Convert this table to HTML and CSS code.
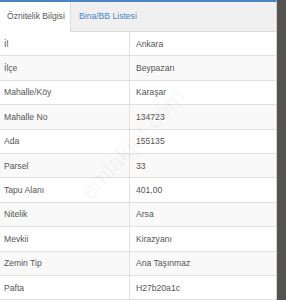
FILE: index.html
```html
<!DOCTYPE html>
<html lang="tr">
<head>
<meta charset="utf-8">
<link rel="stylesheet" href="styles.css">
</head>
<body>
<div class="page">
  <div class="panel">
    <div class="tabs">
      <div class="tab active">Öznitelik Bilgisi</div>
      <div class="tab link">Bina/BB Listesi</div>
    </div>
    <table class="attrs">
      <tr><td class="k">İl</td><td class="v">Ankara</td></tr>
      <tr><td class="k">İlçe</td><td class="v">Beypazarı</td></tr>
      <tr><td class="k">Mahalle/Köy</td><td class="v">Karaşar</td></tr>
      <tr><td class="k">Mahalle No</td><td class="v">134723</td></tr>
      <tr><td class="k">Ada</td><td class="v">155135</td></tr>
      <tr><td class="k">Parsel</td><td class="v">33</td></tr>
      <tr><td class="k">Tapu Alanı</td><td class="v">401,00</td></tr>
      <tr><td class="k">Nitelik</td><td class="v">Arsa</td></tr>
      <tr><td class="k">Mevkii</td><td class="v">Kirazyanı</td></tr>
      <tr><td class="k">Zemin Tip</td><td class="v">Ana Taşınmaz</td></tr>
      <tr><td class="k">Pafta</td><td class="v">H27b20a1c</td></tr>
    </table>
    <div class="watermark">emlakjet.com</div>
  </div>
  <div class="side"></div>
</div>
</body>
</html>
```
FILE: styles.css
```css
html, body {
  margin: 0;
  padding: 0;
  height: 100%;
  overflow: hidden;
}
body {
  background: #56554f;
  font-family: "Liberation Sans", Arial, sans-serif;
  color: #555;
}
.page {
  display: flex;
  height: 300px;
}
.panel {
  position: relative;
  width: 276px;
  background: #fff;
  border-top: 2px solid #4a86c4;
  border-right: 1px solid #cfcfcf;
  overflow: hidden;
}
.side {
  flex: 1;
  background: #55534d;
}
.tabs {
  display: flex;
  height: 29px;
  background: #f0f0f0;
  border-bottom: 1px solid #dcdcdc;
}
.tab {
  font-size: 8.6px;
  line-height: 29px;
  white-space: nowrap;
}
.tab.active {
  box-sizing: border-box;
  width: 71px;
  padding-left: 7px;
  background: #fff;
  color: #555;
  border-right: 1px solid #dcdcdc;
  height: 30px;
}
.tab.link {
  color: #3f86c8;
  padding-left: 8px;
}
.attrs {
  width: 100%;
  border-collapse: collapse;
  font-size: 8.6px;
}
.attrs tr:nth-child(even) td {
  background: #f9f9f9;
}
.attrs td {
  height: 23.4px;
  padding: 0;
  border-bottom: 1px solid #e0e0e0;
  vertical-align: middle;
  color: #555;
}
.attrs td.k {
  width: 125px;
  padding-left: 4px;
  border-right: 1px solid #e0e0e0;
}
.attrs td.v {
  padding-left: 6px;
}
.watermark {
  position: absolute;
  left: 62px;
  top: 128px;
  font-size: 24px;
  color: rgba(0, 0, 0, 0.05);
  transform: rotate(-47deg);
  white-space: nowrap;
  pointer-events: none;
}
```
